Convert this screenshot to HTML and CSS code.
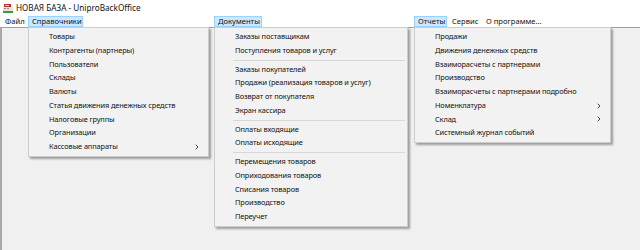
FILE: index.html
```html
<!DOCTYPE html>
<html lang="ru">
<head>
    <meta charset="UTF-8" />
    <title>НОВАЯ БАЗА - UniproBackOffice</title>
    <link rel="stylesheet" href="styles.css">
</head>
<body>
    <div class="window">
        <div class="titlebar">
            <svg class="app-icon" width="10" height="9" viewBox="0 0 10 9">
                <rect x="1" y="0" width="7" height="3" fill="#b3312b"/>
                <rect x="2" y="1" width="4" height="1" fill="#f3d2c8"/>
                <rect x="0" y="3" width="10" height="4" fill="#e9e2d6"/>
                <rect x="1" y="4" width="2" height="1" fill="#8a8a8a"/>
                <rect x="4" y="4" width="2" height="1" fill="#8a8a8a"/>
                <rect x="0" y="7" width="10" height="2" fill="#3f9b3a"/>
            </svg>
            <span class="title">НОВАЯ БАЗА - UniproBackOffice</span>
        </div>

        <div class="menubar">
            <div class="menu-item file">Файл</div>
            <div class="menu-item open dict-item">Справочники
                <div class="dropdown dict">
                    <div class="row">Товары</div>
                    <div class="row">Контрагенты (партнеры)</div>
                    <div class="row">Пользователи</div>
                    <div class="row">Склады</div>
                    <div class="row">Валюты</div>
                    <div class="row">Статья движения денежных средств</div>
                    <div class="row">Налоговые группы</div>
                    <div class="row">Организации</div>
                    <div class="row sub">Кассовые аппараты
                        <svg class="chevron" width="4" height="6" viewBox="0 0 4 6"><path d="M0.7 0.7 L3 3 L0.7 5.3" /></svg>
                    </div>
                </div>
            </div>
            <div class="menu-item open docs">Документы
                <div class="dropdown docs-menu">
                    <div class="row">Заказы поставщикам</div>
                    <div class="row">Поступления товаров и услуг</div>
                    <div class="sep"></div>
                    <div class="row">Заказы покупателей</div>
                    <div class="row">Продажи (реализация товаров и услуг)</div>
                    <div class="row">Возврат от покупателя</div>
                    <div class="row">Экран кассира</div>
                    <div class="sep"></div>
                    <div class="row">Оплаты входящие</div>
                    <div class="row">Оплаты исходящие</div>
                    <div class="sep"></div>
                    <div class="row">Перемещения товаров</div>
                    <div class="row">Оприходования товаров</div>
                    <div class="row">Списания товаров</div>
                    <div class="row">Производство</div>
                    <div class="row">Переучет</div>
                </div>
            </div>
            <div class="menu-item open reports">Отчеты
                <div class="dropdown reports-menu">
                    <div class="row">Продажи</div>
                    <div class="row">Движения денежных средств</div>
                    <div class="row">Взаиморасчеты с партнерами</div>
                    <div class="row">Производство</div>
                    <div class="row">Взаиморасчеты с партнерами подробно</div>
                    <div class="row sub">Номенклатура
                        <svg class="chevron" width="4" height="6" viewBox="0 0 4 6"><path d="M0.7 0.7 L3 3 L0.7 5.3" /></svg>
                    </div>
                    <div class="row sub">Склад
                        <svg class="chevron" width="4" height="6" viewBox="0 0 4 6"><path d="M0.7 0.7 L3 3 L0.7 5.3" /></svg>
                    </div>
                    <div class="row">Системный журнал событий</div>
                </div>
            </div>
            <div class="menu-item service">Сервис</div>
            <div class="menu-item">О программе...</div>
        </div>

        <div class="client"></div>
    </div>
</body>
</html>
```

FILE: styles.css
```css
*{
    margin:0;
    padding:0;
    box-sizing:border-box;
}
body{
    width:640px;
    height:250px;
    overflow:hidden;
    background:#fff;
    font-family:"Noto Sans", "Open Sans", sans-serif;
    font-size:8px;
    color:#111;
}
.window{
    display:flex;
    flex-direction:column;
    height:250px;
}
.titlebar{
    height:16px;
    display:flex;
    align-items:center;
    padding-left:3px;
    background:#fff;
}
.app-icon{
    display:block;
    margin-right:3px;
}
.title{
    font-size:8.2px;
    line-height:16px;
}
.menubar{
    height:11px;
    display:flex;
    align-items:flex-start;
    background:#fff;
    position:relative;
    z-index:2;
}
.menu-item{
    position:relative;
    height:11px;
    line-height:9px;
    font-size:7.6px;
    padding:0 3px;
    border:1px solid transparent;
    white-space:nowrap;
    text-align:center;
}
.menu-item.open{
    background:#cce8ff;
    border-color:#99d1ff;
}
.menu-item.file{
    width:28px;
    padding-left:4px;
    text-align:left;
}
.dict-item{
    width:55px;
}
.menu-item.docs{
    width:48px;
    margin-left:131px;
}
.menu-item.reports{
    width:33px;
    margin-left:152px;
}
.menu-item.service{
    width:35px;
    padding-left:4px;
    text-align:left;
}
.dropdown{
    position:absolute;
    left:-1px;
    top:10px;
    background:#f2f2f2;
    border:1px solid #cccccc;
    box-shadow:2px 2px 2px rgba(0, 0, 0, 0.35);
    padding:2px 0;
    text-align:left;
    font-size:7.4px;
    letter-spacing:-0.12px;
}
.dict{
    width:181px;
}
.docs-menu{
    width:194px;
}
.reports-menu{
    width:197px;
}
.row{
    height:13.75px;
    line-height:13.75px;
    padding-left:20px;
    display:flex;
    align-items:center;
    justify-content:space-between;
    padding-right:9px;
}
.chevron{
    display:block;
}
.chevron path{
    fill:none;
    stroke:#333;
    stroke-width:0.9;
}
.sep{
    height:5px;
    display:flex;
    align-items:center;
    padding:0 2px 0 18px;
}
.sep::after{
    content:"";
    display:block;
    width:100%;
    height:1px;
    background:#d7d7d7;
}
.client{
    flex:1;
    background:#f0f0f0;
    border-top:1px solid #a0a0a0;
    border-left:2px solid #a9a9a9;
}
```
